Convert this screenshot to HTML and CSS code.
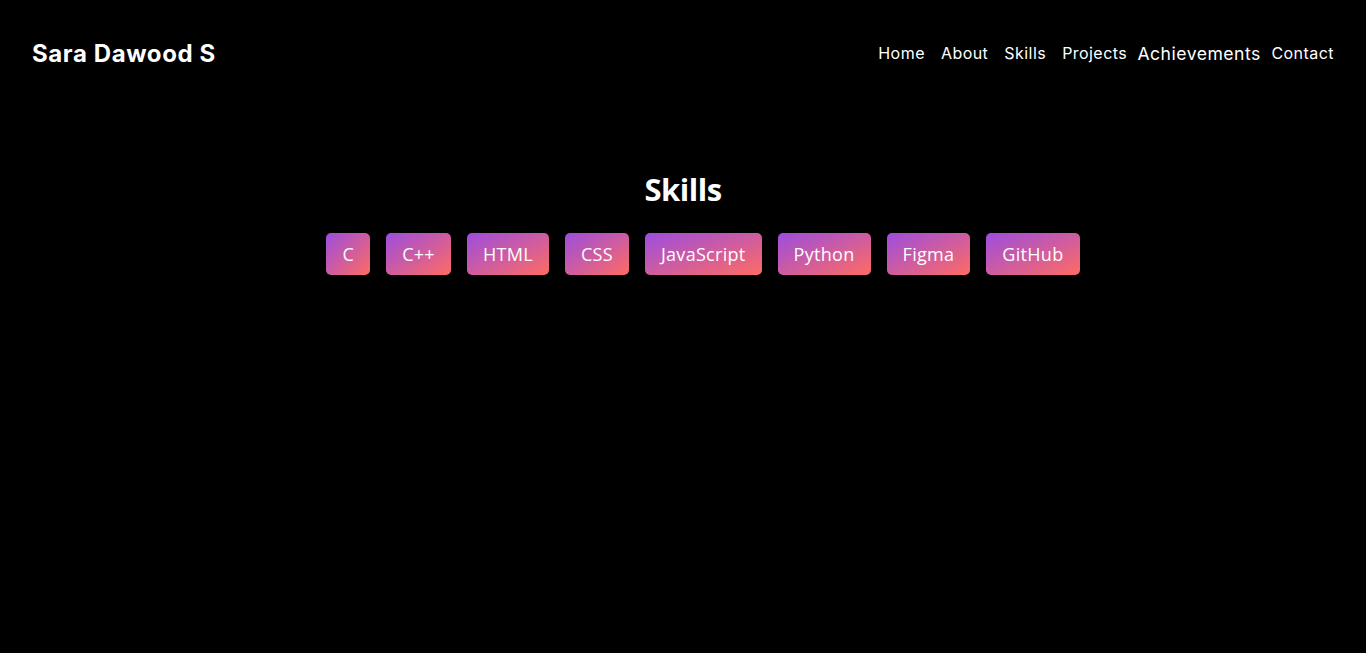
FILE: index.html
```html
<!DOCTYPE html>
<html lang="en">
<head>
<meta charset="utf-8">
<title>Sara Dawood S</title>
<link rel="stylesheet" href="styles.css">
</head>
<body>
<header class="header">
  <div class="logo">Sara Dawood S</div>
  <nav class="nav">
    <a href="#">Home</a>
    <a href="#">About</a>
    <a href="#">Skills</a>
    <a href="#">Projects</a>
    <a href="#" class="hover">Achievements</a>
    <a href="#">Contact</a>
  </nav>
</header>
<section class="skills">
  <h2 class="skills-title">Skills</h2>
  <ul class="skill-list">
    <li class="skill">C</li>
    <li class="skill">C++</li>
    <li class="skill">HTML</li>
    <li class="skill">CSS</li>
    <li class="skill">JavaScript</li>
    <li class="skill">Python</li>
    <li class="skill">Figma</li>
    <li class="skill">GitHub</li>
  </ul>
</section>
</body>
</html>
```
FILE: styles.css
```css
html, body {
  margin: 0;
  padding: 0;
  background: #000;
  color: #fff;
  height: 100%;
}
body {
  font-family: "Open Sans", "Noto Sans", sans-serif;
}
.header {
  display: flex;
  justify-content: space-between;
  align-items: center;
  padding: 37px 32px 0 32px;
  height: 32px;
}
.logo {
  font-family: "Inter", "Noto Sans", sans-serif;
  font-weight: 700;
  font-size: 24px;
  letter-spacing: 0.6px;
}
.nav {
  display: flex;
  gap: 16px;
  align-items: center;
}
.nav a {
  color: #fff;
  text-decoration: none;
  font-family: "Inter", "Noto Sans", sans-serif;
  font-size: 16px;
  font-weight: 400;
  letter-spacing: 0.45px;
}
.nav a.hover {
  transform: scale(1.1);
}
.skills {
  padding-top: 100px;
  text-align: center;
}
.skills-title {
  margin: 0;
  font-family: "Open Sans", sans-serif;
  font-weight: 700;
  font-size: 31px;
  line-height: 40px;
  letter-spacing: -0.5px;
}
.skill-list {
  display: flex;
  justify-content: center;
  gap: 16px;
  margin: 24px 0 0 0;
  padding: 0 0 0 40px;
  list-style: none;
}
.skill {
  height: 42px;
  line-height: 42px;
  padding: 0 16px;
  box-sizing: border-box;
  border-radius: 5px;
  font-size: 18px;
  letter-spacing: 0.3px;
  background: linear-gradient(to bottom right, #9c4ddf, #ff6b63);
  color: #fff;
}
```
